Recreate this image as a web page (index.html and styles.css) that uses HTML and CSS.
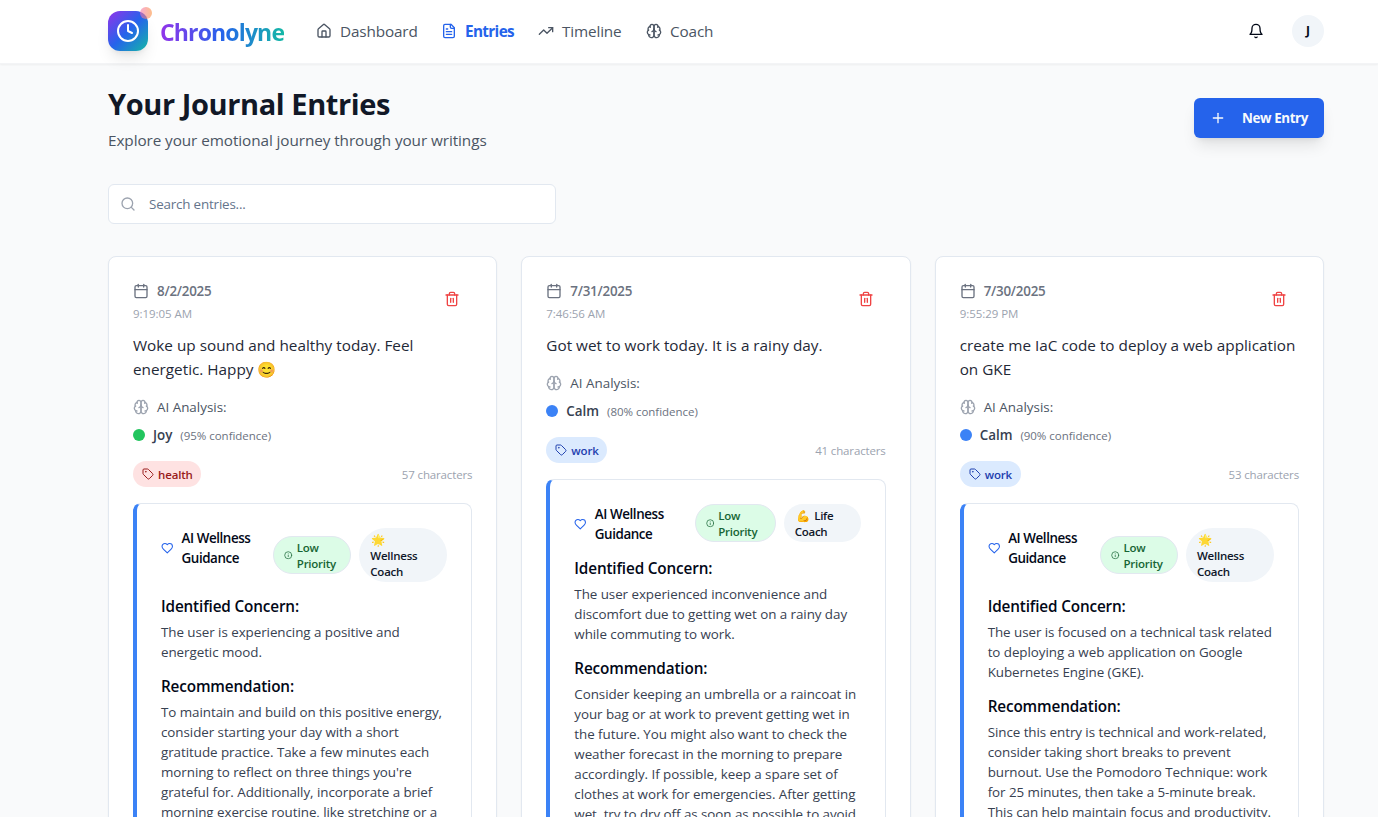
FILE: index.html
```
<!DOCTYPE html>
<html lang="en">
<head>
    <meta charset="UTF-8">
    <meta name="viewport" content="width=device-width, initial-scale=1.0">
    <title>Chronolyne - Your Journal Entries</title>
    <link rel="stylesheet" href="styles.css">
</head>
<body>
    <!-- Icon sprite -->
    <svg class="sprite" width="0" height="0">
        <symbol id="i-clock" viewBox="0 0 24 24"><circle cx="12" cy="12" r="10"/><path d="M12 6v6l4 2"/></symbol>
        <symbol id="i-home" viewBox="0 0 24 24"><path d="M15 21v-8a1 1 0 0 0-1-1h-4a1 1 0 0 0-1 1v8"/><path d="M3 10a2 2 0 0 1 .709-1.528l7-5.999a2 2 0 0 1 2.582 0l7 5.999A2 2 0 0 1 21 10v9a2 2 0 0 1-2 2H5a2 2 0 0 1-2-2z"/></symbol>
        <symbol id="i-file" viewBox="0 0 24 24"><path d="M15 2H6a2 2 0 0 0-2 2v16a2 2 0 0 0 2 2h12a2 2 0 0 0 2-2V7Z"/><path d="M14 2v4a2 2 0 0 0 2 2h4"/><path d="M10 9H8"/><path d="M16 13H8"/><path d="M16 17H8"/></symbol>
        <symbol id="i-trend" viewBox="0 0 24 24"><path d="M22 7l-8.5 8.5-5-5L2 17"/><path d="M16 7h6v6"/></symbol>
        <symbol id="i-brain" viewBox="0 0 24 24"><path d="M12 5a3 3 0 1 0-5.997.125 4 4 0 0 0-2.526 5.77 4 4 0 0 0 .556 6.588A4 4 0 1 0 12 18Z"/><path d="M12 5a3 3 0 1 1 5.997.125 4 4 0 0 1 2.526 5.77 4 4 0 0 1-.556 6.588A4 4 0 1 1 12 18Z"/><path d="M15 13a4.5 4.5 0 0 1-3-4 4.5 4.5 0 0 1-3 4"/><path d="M17.599 6.5a3 3 0 0 0 .399-1.375"/><path d="M6.003 5.125A3 3 0 0 0 6.401 6.5"/><path d="M3.477 10.896a4 4 0 0 1 .585-.396"/><path d="M19.938 10.5a4 4 0 0 1 .585.396"/><path d="M6 18a4 4 0 0 1-1.967-.516"/><path d="M19.967 17.484A4 4 0 0 1 18 18"/></symbol>
        <symbol id="i-bell" viewBox="0 0 24 24"><path d="M6 8a6 6 0 0 1 12 0c0 7 3 9 3 9H3s3-2 3-9"/><path d="M10.3 21a1.94 1.94 0 0 0 3.4 0"/></symbol>
        <symbol id="i-plus" viewBox="0 0 24 24"><path d="M5 12h14"/><path d="M12 5v14"/></symbol>
        <symbol id="i-search" viewBox="0 0 24 24"><circle cx="11" cy="11" r="8"/><path d="m21 21-4.3-4.3"/></symbol>
        <symbol id="i-calendar" viewBox="0 0 24 24"><path d="M8 2v4"/><path d="M16 2v4"/><rect width="18" height="18" x="3" y="4" rx="2"/><path d="M3 10h18"/></symbol>
        <symbol id="i-trash" viewBox="0 0 24 24"><path d="M3 6h18"/><path d="M19 6v14c0 1-1 2-2 2H7c-1 0-2-1-2-2V6"/><path d="M8 6V4c0-1 1-2 2-2h4c1 0 2 1 2 2v2"/><path d="M10 11v6"/><path d="M14 11v6"/></symbol>
        <symbol id="i-tag" viewBox="0 0 24 24"><path d="M12.586 2.586A2 2 0 0 0 11.172 2H4a2 2 0 0 0-2 2v7.172a2 2 0 0 0 .586 1.414l8.704 8.704a2.426 2.426 0 0 0 3.42 0l6.58-6.58a2.426 2.426 0 0 0 0-3.42z"/><circle cx="7.5" cy="7.5" r=".5"/></symbol>
        <symbol id="i-heart" viewBox="0 0 24 24"><path d="M19 14c1.49-1.46 3-3.21 3-5.5A5.5 5.5 0 0 0 16.5 3c-1.76 0-3 .5-4.5 2-1.5-1.5-2.74-2-4.5-2A5.5 5.5 0 0 0 2 8.5c0 2.3 1.5 4.05 3 5.5l7 7Z"/></symbol>
        <symbol id="i-info" viewBox="0 0 24 24"><circle cx="12" cy="12" r="10"/><path d="M12 16v-4"/><path d="M12 8h.01"/></symbol>
    </svg>

    <header class="header">
        <a href="#" class="logo">
            <span class="logo-mark">
                <svg class="icon"><use href="#i-clock"/></svg>
                <span class="logo-dot"></span>
            </span>
            <span class="logo-text">Chronolyne</span>
        </a>
        <nav class="nav">
            <a href="#" class="nav-dashboard"><svg class="icon"><use href="#i-home"/></svg>Dashboard</a>
            <a href="#" class="nav-entries active"><svg class="icon"><use href="#i-file"/></svg>Entries</a>
            <a href="#" class="nav-timeline"><svg class="icon"><use href="#i-trend"/></svg>Timeline</a>
            <a href="#" class="nav-coach"><svg class="icon"><use href="#i-brain"/></svg>Coach</a>
        </nav>
        <div class="header-actions">
            <svg class="icon bell"><use href="#i-bell"/></svg>
            <span class="avatar">J</span>
        </div>
    </header>

    <main class="main">
        <div class="page-head">
            <div>
                <h1>Your Journal Entries</h1>
                <p class="subtitle">Explore your emotional journey through your writings</p>
            </div>
            <button class="new-entry"><svg class="icon"><use href="#i-plus"/></svg>New Entry</button>
        </div>

        <div class="search">
            <svg class="icon"><use href="#i-search"/></svg>
            <input type="text" placeholder="Search entries...">
        </div>

        <div class="grid">
            <article class="card">
                <div class="card-head">
                    <div>
                        <div class="date"><svg class="icon"><use href="#i-calendar"/></svg>8/2/2025</div>
                        <div class="time">9:19:05 AM</div>
                    </div>
                    <button class="delete"><svg class="icon"><use href="#i-trash"/></svg></button>
                </div>
                <p class="entry-text">Woke up sound and healthy today. Feel<br>energetic. Happy <span class="emoji">😊</span></p>
                <div class="analysis"><svg class="icon"><use href="#i-brain"/></svg>AI Analysis:</div>
                <div class="mood"><span class="dot joy"></span><strong>Joy</strong><span class="confidence">(95% confidence)</span></div>
                <div class="card-meta">
                    <span class="tag health"><svg class="icon"><use href="#i-tag"/></svg>health</span>
                    <span class="chars">57 characters</span>
                </div>
                <section class="guidance">
                    <div class="guidance-head">
                        <div class="guidance-title"><svg class="icon"><use href="#i-heart"/></svg><span>AI Wellness<br>Guidance</span></div>
                        <span class="badge priority"><svg class="icon"><use href="#i-info"/></svg><span>Low<br>Priority</span></span>
                        <span class="badge coach"><span class="emoji">🌟</span><br>Wellness<br>Coach</span>
                    </div>
                    <h3>Identified Concern:</h3>
                    <p>The user is experiencing a positive and<br>energetic mood.</p>
                    <h3>Recommendation:</h3>
                    <p>To maintain and build on this positive energy,<br>consider starting your day with a short<br>gratitude practice. Take a few minutes each<br>morning to reflect on three things you're<br>grateful for. Additionally, incorporate a brief<br>morning exercise routine, like stretching or a</p>
                </section>
            </article>

            <article class="card">
                <div class="card-head">
                    <div>
                        <div class="date"><svg class="icon"><use href="#i-calendar"/></svg>7/31/2025</div>
                        <div class="time">7:46:56 AM</div>
                    </div>
                    <button class="delete"><svg class="icon"><use href="#i-trash"/></svg></button>
                </div>
                <p class="entry-text">Got wet to work today. It is a rainy day.</p>
                <div class="analysis"><svg class="icon"><use href="#i-brain"/></svg>AI Analysis:</div>
                <div class="mood"><span class="dot calm"></span><strong>Calm</strong><span class="confidence">(80% confidence)</span></div>
                <div class="card-meta">
                    <span class="tag work"><svg class="icon"><use href="#i-tag"/></svg>work</span>
                    <span class="chars">41 characters</span>
                </div>
                <section class="guidance">
                    <div class="guidance-head">
                        <div class="guidance-title"><svg class="icon"><use href="#i-heart"/></svg><span>AI Wellness<br>Guidance</span></div>
                        <span class="badge priority wide"><svg class="icon"><use href="#i-info"/></svg><span>Low<br>Priority</span></span>
                        <span class="badge coach narrow"><span class="emoji">💪</span> Life<br>Coach</span>
                    </div>
                    <h3>Identified Concern:</h3>
                    <p>The user experienced inconvenience and<br>discomfort due to getting wet on a rainy day<br>while commuting to work.</p>
                    <h3>Recommendation:</h3>
                    <p>Consider keeping an umbrella or a raincoat in<br>your bag or at work to prevent getting wet in<br>the future. You might also want to check the<br>weather forecast in the morning to prepare<br>accordingly. If possible, keep a spare set of<br>clothes at work for emergencies. After getting<br>wet, try to dry off as soon as possible to avoid</p>
                </section>
            </article>

            <article class="card">
                <div class="card-head">
                    <div>
                        <div class="date"><svg class="icon"><use href="#i-calendar"/></svg>7/30/2025</div>
                        <div class="time">9:55:29 PM</div>
                    </div>
                    <button class="delete"><svg class="icon"><use href="#i-trash"/></svg></button>
                </div>
                <p class="entry-text">create me IaC code to deploy a web application<br>on GKE</p>
                <div class="analysis"><svg class="icon"><use href="#i-brain"/></svg>AI Analysis:</div>
                <div class="mood"><span class="dot calm"></span><strong>Calm</strong><span class="confidence">(90% confidence)</span></div>
                <div class="card-meta">
                    <span class="tag work"><svg class="icon"><use href="#i-tag"/></svg>work</span>
                    <span class="chars">53 characters</span>
                </div>
                <section class="guidance">
                    <div class="guidance-head">
                        <div class="guidance-title"><svg class="icon"><use href="#i-heart"/></svg><span>AI Wellness<br>Guidance</span></div>
                        <span class="badge priority"><svg class="icon"><use href="#i-info"/></svg><span>Low<br>Priority</span></span>
                        <span class="badge coach"><span class="emoji">🌟</span><br>Wellness<br>Coach</span>
                    </div>
                    <h3>Identified Concern:</h3>
                    <p>The user is focused on a technical task related<br>to deploying a web application on Google<br>Kubernetes Engine (GKE).</p>
                    <h3>Recommendation:</h3>
                    <p>Since this entry is technical and work-related,<br>consider taking short breaks to prevent<br>burnout. Use the Pomodoro Technique: work<br>for 25 minutes, then take a 5-minute break.<br>This can help maintain focus and productivity.</p>
                </section>
            </article>
        </div>
    </main>
</body>
</html>
```
FILE: styles.css
```
* {
    box-sizing: border-box;
}

body {
    font-family: "Segoe UI", "Open Sans", "Noto Sans", sans-serif;
    margin: 0;
    height: 100vh;
    overflow: hidden;
    background-color: #f9fafb;
    color: #020817;
    font-size: 13.4px;
    line-height: 20px;
    white-space: nowrap;
}

h1, h3, p {
    margin: 0;
}

a {
    color: inherit;
    text-decoration: none;
}

button {
    font-family: inherit;
    border: none;
    cursor: pointer;
}

.sprite {
    display: none;
}

.icon {
    width: 16px;
    height: 16px;
    flex-shrink: 0;
    fill: none;
    stroke: currentColor;
    stroke-width: 2;
    stroke-linecap: round;
    stroke-linejoin: round;
}

/* Header */
.header {
    display: flex;
    align-items: center;
    height: 64px;
    padding: 0 54px 1px 108px;
    background-color: #fff;
    border-bottom: 1px solid #f3f4f6;
    box-shadow: 0 1px 2px rgba(0, 0, 0, 0.05);
}

.logo {
    display: flex;
    align-items: center;
    gap: 12px;
    width: 208px;
}

.logo-mark {
    position: relative;
    display: flex;
    align-items: center;
    justify-content: center;
    width: 40px;
    height: 40px;
    border-radius: 12px;
    color: #fff;
    background: linear-gradient(135deg, #9333ea, #2563eb 50%, #14b8a6);
    box-shadow: 0 10px 15px -3px rgba(0, 0, 0, 0.1), 0 4px 6px -4px rgba(0, 0, 0, 0.1);
}

.logo-mark .icon {
    width: 24px;
    height: 24px;
}

.logo-dot {
    position: absolute;
    top: -4px;
    right: -4px;
    width: 12px;
    height: 12px;
    border-radius: 50%;
    background: linear-gradient(90deg, #f472b6, #fb923c);
    opacity: 0.6;
}

.logo-text {
    padding-top: 2px;
    font-size: 23px;
    line-height: 32px;
    font-weight: 700;
    letter-spacing: -0.85px;
    background: linear-gradient(90deg, #9333ea, #2563eb 50%, #14b8a6);
    -webkit-background-clip: text;
    background-clip: text;
    color: transparent;
}

.nav {
    display: flex;
    gap: 24px;
    font-size: 15.3px;
    line-height: 24px;
    letter-spacing: -0.15px;
    color: #4b5563;
}

.nav a {
    display: flex;
    align-items: center;
    gap: 8px;
}

.nav .active {
    color: #2563eb;
    font-weight: 700;
    letter-spacing: -0.65px;
}

.nav-dashboard {
    width: 101px;
}

.nav-entries {
    width: 73px;
}

.nav-timeline {
    width: 84px;
}

.header-actions {
    display: flex;
    align-items: center;
    gap: 28px;
    margin-left: auto;
}

.avatar {
    display: flex;
    align-items: center;
    justify-content: center;
    width: 32px;
    height: 32px;
    border-radius: 50%;
    background-color: #f1f5f9;
    font-size: 12px;
    font-weight: 700;
}

/* Page heading */
.main {
    padding: 20px 54px 0 108px;
}

.page-head {
    display: flex;
    align-items: center;
    justify-content: space-between;
}

h1 {
    font-size: 29px;
    line-height: 36px;
    font-weight: 700;
    letter-spacing: -0.4px;
    color: #111827;
    padding-top: 2px;
    margin-bottom: 6px;
}

.subtitle {
    font-size: 15.3px;
    line-height: 24px;
    letter-spacing: -0.08px;
    color: #4b5563;
}

.new-entry {
    display: flex;
    align-items: center;
    gap: 16px;
    width: 130px;
    height: 40px;
    padding: 0 16px;
    border-radius: 6px;
    background-color: #2563eb;
    color: #f8fafc;
    font-size: 13.4px;
    font-weight: 700;
    letter-spacing: -0.4px;
    box-shadow: 0 10px 15px -3px rgba(0, 0, 0, 0.1), 0 4px 6px -4px rgba(0, 0, 0, 0.1);
}

.search {
    display: flex;
    align-items: center;
    gap: 13px;
    width: 448px;
    height: 40px;
    margin: 32px 0;
    padding: 0 11px;
    border: 1px solid #e2e8f0;
    border-radius: 6px;
    background-color: #fff;
    color: #9ca3af;
}

.search input {
    flex: 1;
    padding: 0;
    border: none;
    outline: none;
    background: none;
    font-family: inherit;
    font-size: 13.4px;
    letter-spacing: -0.18px;
}

.search input::placeholder {
    color: #64748b;
}

/* Entry cards */
.grid {
    display: grid;
    grid-template-columns: repeat(3, 1fr);
    gap: 24px;
}

.card {
    min-width: 0;
    min-height: 700px;
    padding: 24px;
    border: 1px solid #e2e8f0;
    border-radius: 8px;
    background-color: #fff;
    box-shadow: 0 1px 2px rgba(0, 0, 0, 0.05);
}

.card-head {
    display: flex;
    align-items: flex-start;
    justify-content: space-between;
    margin-bottom: 12px;
}

.date {
    display: flex;
    align-items: center;
    gap: 8px;
    color: #6b7280;
    font-weight: 600;
    letter-spacing: -0.25px;
}

.time {
    margin: 5px 0 -1px;
    font-size: 11.5px;
    line-height: 16px;
    letter-spacing: -0.05px;
    color: #9ca3af;
}

.delete {
    display: flex;
    align-items: center;
    justify-content: center;
    width: 40px;
    height: 36px;
    padding: 0;
    background: none;
    color: #ef4444;
}

.entry-text {
    margin-bottom: 16px;
    font-size: 15.3px;
    line-height: 24px;
    letter-spacing: 0;
    color: #1f2937;
}

.analysis {
    display: flex;
    align-items: center;
    gap: 8px;
    margin-bottom: 8px;
    color: #4b5563;
}

.analysis .icon {
    color: #9ca3af;
}

.mood {
    display: flex;
    align-items: center;
    gap: 8px;
}

.mood strong {
    font-weight: 600;
    color: #374151;
}

.dot {
    width: 12px;
    height: 12px;
    border-radius: 50%;
}

.joy {
    background-color: #22c55e;
}

.calm {
    background-color: #3b82f6;
}

.confidence {
    padding-top: 2px;
    font-size: 11.5px;
    line-height: 16px;
    letter-spacing: -0.03px;
    color: #6b7280;
}

.card-meta {
    display: flex;
    align-items: center;
    justify-content: space-between;
    margin: 16px 0;
    font-size: 11.5px;
    letter-spacing: -0.15px;
}

.tag {
    display: flex;
    align-items: center;
    gap: 4px;
    height: 26px;
    padding: 2px 9px 0;
    border-radius: 13px;
    font-weight: 600;
}

.tag .icon {
    width: 12px;
    height: 12px;
    margin-top: -2px;
}

.health {
    width: 68px;
    background-color: #fee2e2;
    color: #991b1b;
}

.work {
    width: 61px;
    background-color: #dbeafe;
    color: #1e40af;
}

.chars {
    padding-top: 2px;
    color: #9ca3af;
}

/* AI guidance panel */
.guidance {
    padding: 24px;
    border: 1px solid #e2e8f0;
    border-left: 4px solid #3b82f6;
    border-radius: 8px;
}

.guidance-head {
    display: flex;
    align-items: flex-start;
    gap: 8px;
    min-height: 40px;
}

.guidance-title {
    display: flex;
    align-items: center;
    gap: 8px;
    flex: 1;
    min-width: 0;
    font-weight: 600;
    letter-spacing: -0.42px;
}

.guidance-title .icon {
    width: 12.5px;
    height: 12.5px;
    color: #2563eb;
}

.badge {
    flex-shrink: 0;
    padding: 3px 10px 1px;
    border: 1px solid transparent;
    border-radius: 27px;
    font-size: 11.5px;
    line-height: 16px;
    font-weight: 600;
    letter-spacing: -0.25px;
}

.badge .emoji {
    margin: 0 2px 0 1px;
}

.priority {
    display: flex;
    align-items: center;
    align-self: center;
    gap: 4px;
    width: 78px;
    border-color: #e2e8f0;
    background-color: #dcfce7;
    color: #166534;
}

.priority .icon {
    width: 8.5px;
    height: 8.5px;
    margin-top: -1px;
}

.priority.wide {
    align-self: flex-start;
    width: 81px;
}

.coach {
    width: 88px;
    background-color: #f1f5f9;
    color: #0f172a;
}

.coach.narrow {
    width: 77px;
}

.guidance h3 {
    margin: 12px 0 4px;
    font-size: 15.3px;
    line-height: 24px;
    font-weight: 600;
    letter-spacing: -0.15px;
}

.guidance p {
    letter-spacing: -0.06px;
    color: #374151;
}
```
